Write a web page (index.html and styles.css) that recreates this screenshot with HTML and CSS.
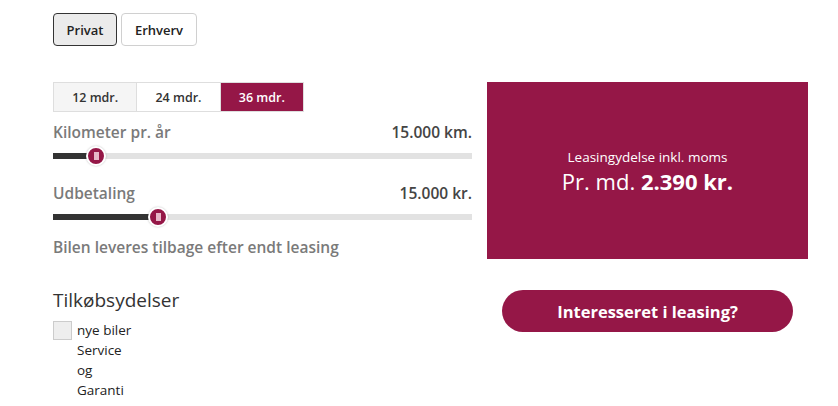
FILE: index.html
```html
<!DOCTYPE html>
<html lang="da">
<head>
<meta charset="utf-8">
<title>Leasing</title>
<link rel="stylesheet" href="styles.css">
</head>
<body>
<div class="page">
  <div class="segmented">
    <button class="seg seg-active">Privat</button>
    <button class="seg">Erhverv</button>
  </div>

  <div class="calc">
    <div class="left">
      <div class="tabs">
        <div class="tab tab-light">12 mdr.</div>
        <div class="tab">24 mdr.</div>
        <div class="tab tab-active">36 mdr.</div>
      </div>

      <div class="row-label first">
        <span class="label">Kilometer pr. år</span>
        <span class="value">15.000 km.</span>
      </div>
      <div class="slider">
        <div class="track"></div>
        <div class="fill" style="width: 43px"></div>
        <div class="thumb" style="left: 43px"><span class="grip"></span></div>
      </div>

      <div class="row-label second">
        <span class="label">Udbetaling</span>
        <span class="value">15.000 kr.</span>
      </div>
      <div class="slider">
        <div class="track"></div>
        <div class="fill" style="width: 105px"></div>
        <div class="thumb" style="left: 105px"><span class="grip"></span></div>
      </div>

      <p class="note">Bilen leveres tilbage efter endt leasing</p>

      <h3 class="extras-title">Tilkøbsydelser</h3>
      <label class="check">
        <span class="box"></span>
        <span class="check-text">nye biler Service og Garanti</span>
      </label>
    </div>

    <div class="right">
      <div class="price-panel">
        <div class="price-caption">Leasingydelse inkl. moms</div>
        <div class="price">Pr. md. <strong>2.390 kr.</strong></div>
      </div>
      <button class="cta">Interesseret i leasing?</button>
    </div>
  </div>
</div>
</body>
</html>
```

FILE: styles.css
```css
* { box-sizing: border-box; }

body {
  margin: 0;
  background: #fff;
  font-family: "Open Sans", Lato, "Liberation Sans", sans-serif;
  color: #333;
}

.page {
  padding: 13px 30px 0 53px;
}

.segmented {
  display: flex;
  gap: 4px;
}

.seg {
  height: 33px;
  padding: 0;
  font-family: inherit;
  font-size: 13px;
  font-weight: 600;
  color: #222;
  background: #fff;
  border: 1px solid #d0d0d0;
  border-radius: 4px;
}

.seg-active {
  width: 64px;
  background: #ebebeb;
  border-color: #333;
}

.seg:not(.seg-active) { width: 76px; }

.calc {
  margin-top: 36px;
  display: grid;
  grid-template-columns: 419px 321px;
  column-gap: 15px;
  align-items: start;
}

.tabs {
  display: flex;
  width: 251px;
  height: 30px;
  border: 1px solid #dedede;
}

.tab {
  flex: 1;
  display: flex;
  align-items: center;
  justify-content: center;
  font-size: 12.5px;
  font-weight: 600;
  color: #333;
  background: #fff;
}

.tab + .tab { border-left: 1px solid #dedede; }
.tab-light { background: #f5f5f5; }
.tab-active { background: #951747; color: #fff; }

.row-label {
  display: flex;
  justify-content: space-between;
  line-height: 20px;
  font-size: 15.5px;
  font-weight: 600;
}

.row-label.first { margin-top: 10px; }
.row-label.second { margin-top: 17px; }

.label { color: #7a7a7a; }
.value { color: #444; }

.slider {
  position: relative;
  margin-top: 4px;
  height: 20px;
}

.track {
  position: absolute;
  left: 0;
  right: 0;
  top: 7px;
  height: 6px;
  background: #e2e2e2;
}

.fill {
  position: absolute;
  left: 0;
  top: 7px;
  height: 6px;
  background: #333;
}

.thumb {
  position: absolute;
  top: 0;
  width: 20px;
  height: 20px;
  margin-left: -10px;
  border-radius: 50%;
  background: #951747;
  border: 2px solid #fff;
  box-shadow: 0 0 2px rgba(0,0,0,0.25);
  display: flex;
  align-items: center;
  justify-content: center;
}

.grip {
  width: 5px;
  height: 8px;
  background: #e7b7c8;
}

.note {
  margin: 10px 0 0;
  line-height: 20px;
  font-size: 15.5px;
  font-weight: 600;
  color: #7a7a7a;
}

.extras-title {
  margin: 31px 0 0;
  font-size: 19px;
  line-height: 24px;
  font-weight: 500;
  color: #333;
}

.check {
  margin-top: 8px;
  display: flex;
  align-items: flex-start;
  gap: 5px;
}

.box {
  flex: none;
  width: 19px;
  height: 19px;
  margin-top: 1px;
  background: #eee;
  border: 1px solid #ccc;
}

.check-text {
  max-width: 58px;
  font-size: 13.5px;
  line-height: 20px;
  font-weight: 500;
  color: #222;
}

.price-panel {
  height: 177px;
  background: #951747;
  color: #fff;
  display: flex;
  flex-direction: column;
  align-items: center;
  justify-content: center;
  text-align: center;
}

.price-caption {
  font-size: 13.5px;
  line-height: 20px;
}

.price {
  font-size: 22px;
  line-height: 28px;
}

.price strong { font-weight: 700; }

.cta {
  display: block;
  width: 291px;
  height: 42px;
  margin: 31px 15px 0;
  border: none;
  border-radius: 21px;
  background: #951747;
  color: #fff;
  font-family: inherit;
  font-size: 16.5px;
  font-weight: 700;
}
```
